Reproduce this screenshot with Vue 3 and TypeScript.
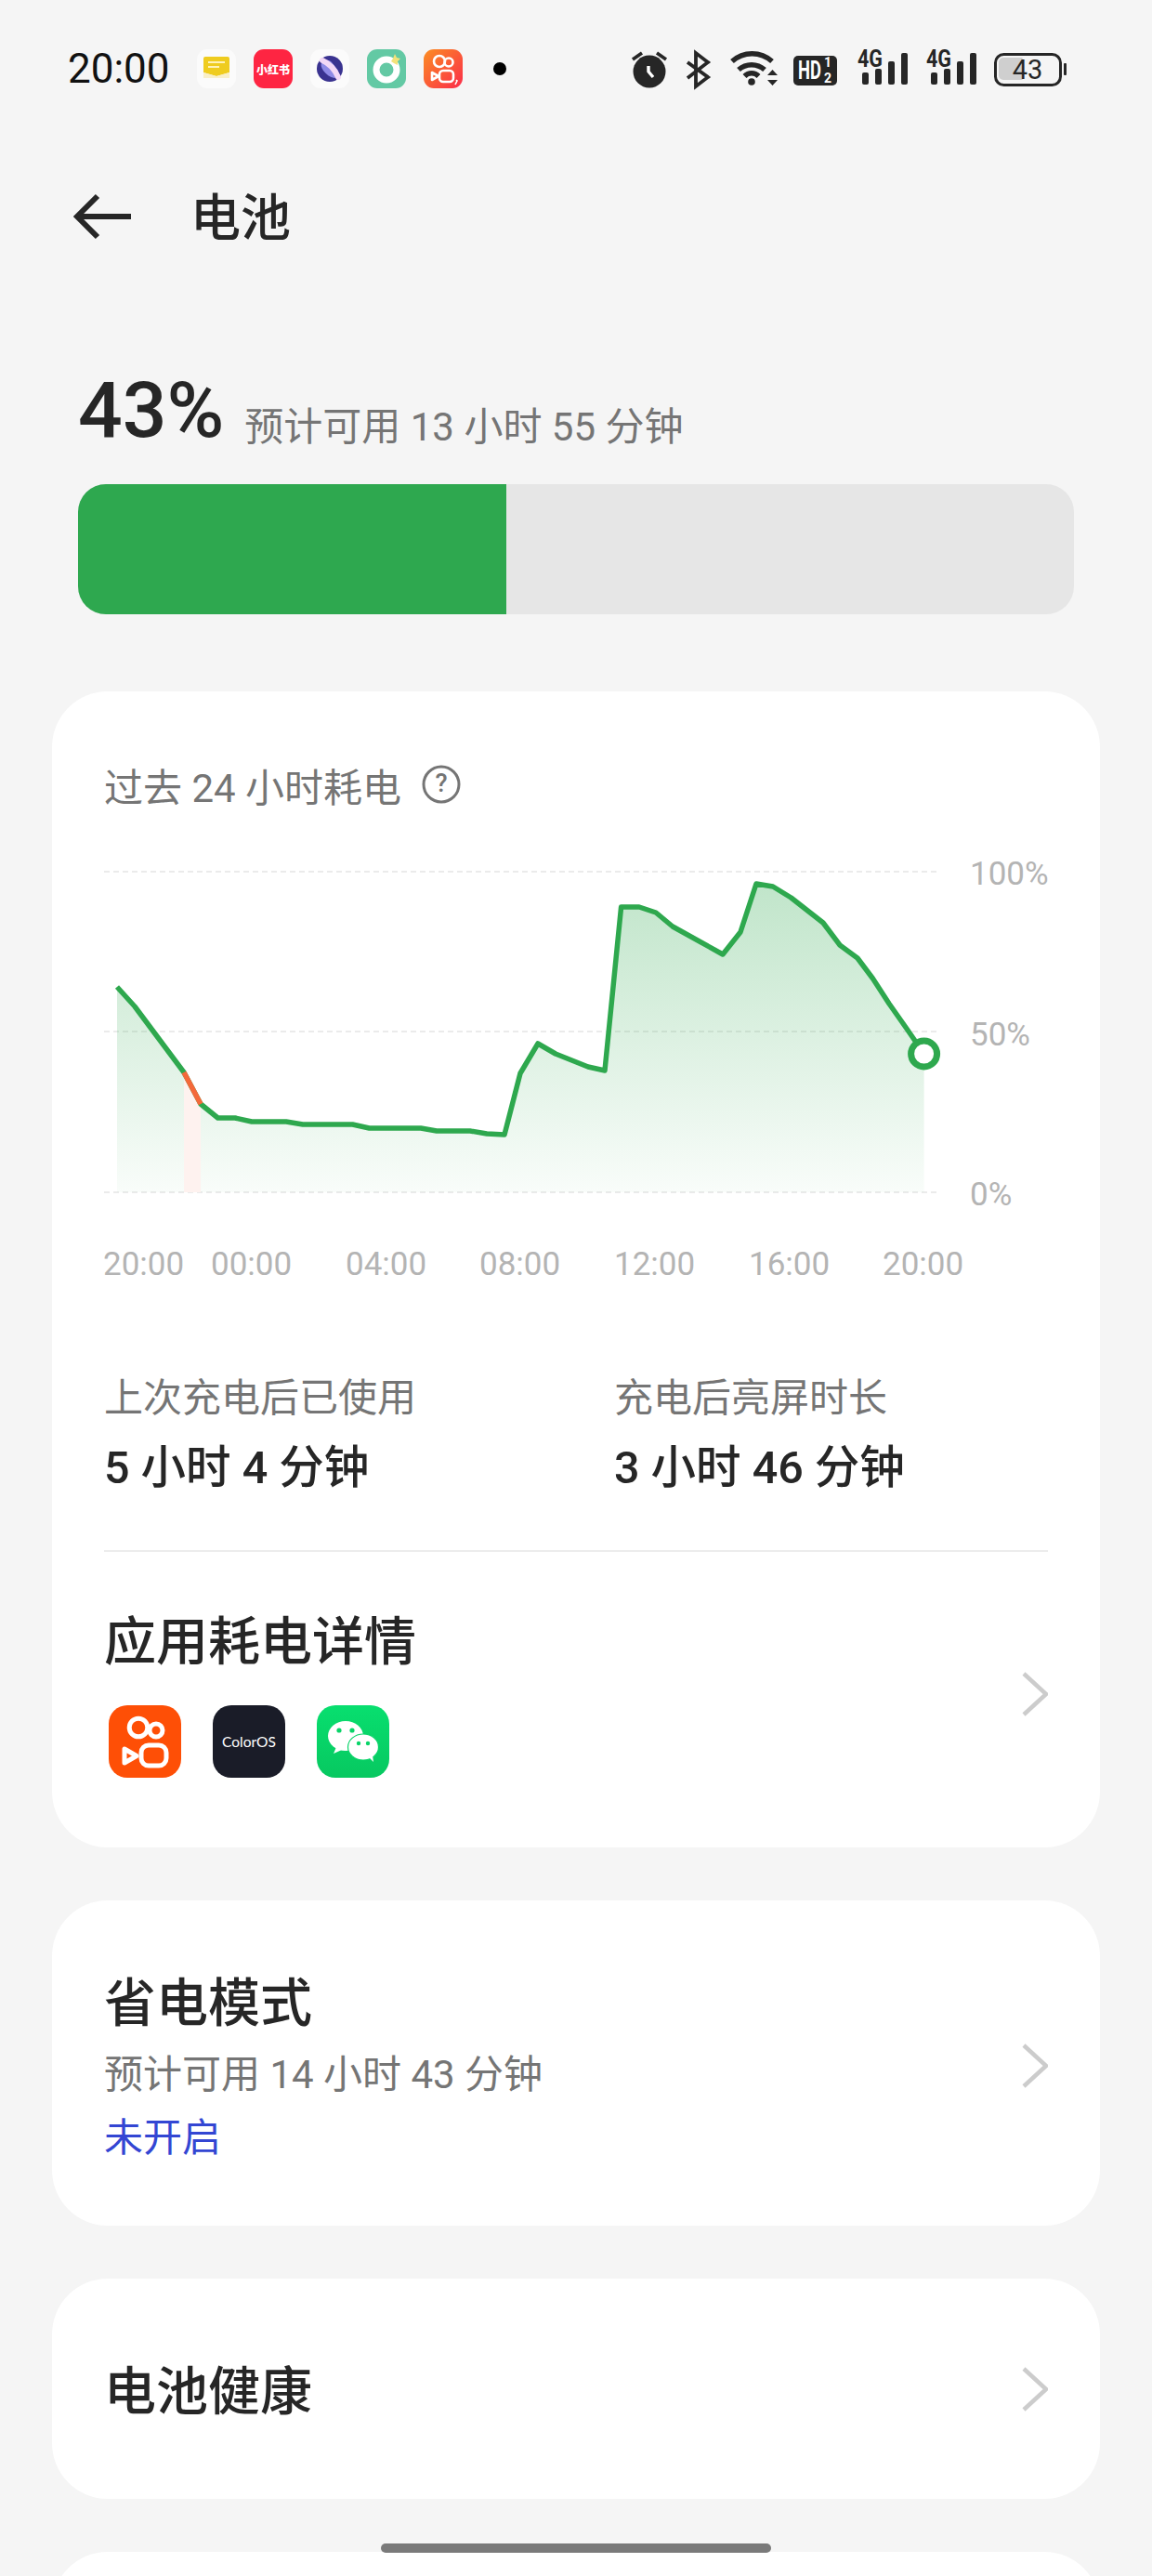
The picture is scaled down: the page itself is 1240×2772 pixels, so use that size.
<template>
  <div class="page">
    <!-- status bar -->
    <div class="status">
      <span class="time">20:00</span>
      <div class="notif">
        <svg class="tile" viewBox="0 0 42 42">
          <rect width="42" height="42" rx="11" fill="#fbfbfb" />
          <path d="M7 10a2 2 0 0 1 2-2h24a2 2 0 0 1 2 2v15l-14 4-14-4z" fill="#efcc1f" />
          <path d="M7 25l14 4 14-4v6H7z" fill="#f9efc8" />
          <path d="M12 14h18M12 19h12" stroke="#fff3b8" stroke-width="2" />
        </svg>
        <div class="tile red">小红书</div>
        <svg class="tile" viewBox="0 0 42 42">
          <rect width="42" height="42" rx="11" fill="#fbfbfb" />
          <circle cx="21" cy="21" r="14" fill="#3a3390" />
          <path d="M12 15c4-4 8-4 11-1l7 9c1 4-1 7-4 8-5-1-9-4-12-8-2-3-3-6-2-8z" fill="#8f8ae6" />
          <path d="M13 12c7 3 13 9 17 18" stroke="#f3d8f6" stroke-width="6" stroke-linecap="round" fill="none" />
        </svg>
        <svg class="tile" viewBox="0 0 42 42">
          <rect width="42" height="42" rx="11" fill="#63c9a4" />
          <circle cx="21" cy="22" r="11" fill="none" stroke="#fff" stroke-width="7" />
          <path d="M30 5l2 4 4 1-3 3 0 4-4-2-3-2 2-3z" fill="#f3e27a" />
        </svg>
        <svg class="tile" viewBox="0 0 42 42">
          <defs>
            <linearGradient id="ks" x1="0" y1="0" x2="1" y2="1">
              <stop offset="0" stop-color="#fb8e23" />
              <stop offset="1" stop-color="#fb2c4a" />
            </linearGradient>
          </defs>
          <rect width="42" height="42" rx="11" fill="url(#ks)" />
          <g fill="none" stroke="#fff" stroke-width="2.6" stroke-linejoin="round">
            <circle cx="17" cy="13" r="6" />
            <circle cx="27" cy="14" r="4.5" />
            <rect x="17" y="23" width="15" height="12" rx="4" />
            <path d="M9 25v8l7-4z" />
          </g>
          <path d="M35 33l1 1-2 4" stroke="#fff" stroke-width="1.6" fill="none" />
        </svg>
      </div>
      <span class="dot" />
      <div class="sysicons">
        <svg width="50" height="52" viewBox="678 48 50 52">
          <circle cx="699" cy="77" r="17.5" fill="#262626" />
          <path d="M681 64l10-7M707 57l10 7" stroke="#262626" stroke-width="3.6" />
          <path d="M698 71v6l5 6" stroke="#fff" stroke-width="3.4" fill="none" />
        </svg>
        <svg width="48" height="52" viewBox="728 48 48 52">
          <path d="M740 67l22 16-13 10V57l13 10-22 17" fill="none" stroke="#262626" stroke-width="3.8" />
        </svg>
        <svg width="70" height="52" viewBox="776 48 70 52">
          <g fill="none" stroke="#262626" stroke-width="5.5">
            <path d="M788 66a32 32 0 0 1 43 0" />
            <path d="M795 75a21 21 0 0 1 28 0" />
            <path d="M801.500 82a10.500 10.500 0 0 1 15 0" />
          </g>
          <circle cx="809" cy="88" r="3.800" fill="#262626" />
          <path d="M826 81l5.500-6 5.500 6zM826 86h11l-5.500 6z" fill="#262626" />
        </svg>
        <svg width="68" height="52" viewBox="846 48 68 52">
          <rect x="854" y="60" width="47" height="32" rx="5" fill="#262626" />
          <text transform="translate(859 85) scale(0.68 1)" class="hd">HD</text>
          <text x="887" y="72" class="hd-n">1</text>
          <text x="887" y="89" class="hd-n">2</text>
        </svg>
        <svg v-for="n in 2" :key="n" width="74" height="52" viewBox="914 48 74 52">
          <text x="923" y="72" class="net" textLength="27" lengthAdjust="spacingAndGlyphs">4G</text>
          <rect
            v-for="b in signalBars"
            :key="b.x"
            :x="b.x"
            :y="b.y"
            width="7"
            :height="91 - b.y"
            rx="2"
            fill="#262626"
          />
        </svg>
        <svg width="88" height="52" viewBox="1062 48 88 52">
          <rect x="1071.500" y="58.500" width="70" height="33" rx="9" fill="none" stroke="#262626" stroke-width="3" />
          <path d="M1080 62h20.500v24H1080a5 5 0 0 1-5-5V67a5 5 0 0 1 5-5z" fill="#cfcfcf" />
          <text x="1106" y="85" text-anchor="middle" class="bat">43</text>
          <rect x="1145" y="68" width="3" height="13" rx="1" fill="#262626" />
        </svg>
      </div>
    </div>

    <!-- header -->
    <div class="nav">
      <svg class="back" width="66" height="52" viewBox="0 0 66 52">
        <path d="M27 4L5 26l22 22M5 26h58" fill="none" stroke="#262626" stroke-width="6" />
      </svg>
      <span class="nav-title">电池</span>
    </div>

    <!-- level -->
    <div class="level">
      <span class="level-num">43%</span>
      <span class="level-sub">预计可用 13 小时 55 分钟</span>
    </div>
    <div class="bar"><div class="bar-fill" /></div>

    <div class="cards">
      <section class="card">
        <div class="chart-head">
          <span>过去 24 小时耗电</span>
          <svg width="42" height="42" viewBox="0 0 42 42">
            <circle cx="21" cy="21" r="19" fill="none" stroke="#757575" stroke-width="3" />
            <text x="21" y="29" text-anchor="middle" class="qmark">?</text>
          </svg>
        </div>

        <svg class="chart" width="1030" height="460" viewBox="112 920 1030 460">
          <defs>
            <linearGradient id="area" x1="0" y1="950" x2="0" y2="1283" gradientUnits="userSpaceOnUse">
              <stop offset="0" stop-color="#2ea84e" stop-opacity="0.3" />
              <stop offset="1" stop-color="#2ea84e" stop-opacity="0.03" />
            </linearGradient>
          </defs>
          <path
            v-for="y in [938, 1110, 1283]"
            :key="y"
            :d="`M112 ${y}H1010`"
            stroke="#ebebeb"
            stroke-width="2"
            stroke-dasharray="6 4"
          />
          <path :d="areaPath" fill="url(#area)" />
          <path d="M198 1154L216 1188V1283H198Z" fill="#fef2ef" />
          <path :d="linePath" fill="none" stroke="#2ea84e" stroke-width="5.500" stroke-linejoin="round" />
          <path d="M198 1154L216 1188" stroke="#f4693a" stroke-width="5.500" />
          <circle cx="994.600" cy="1134" r="14" fill="#fff" stroke="#2ea84e" stroke-width="7" />
          <text v-for="l in yLabels" :key="l.text" x="1044" :y="l.y" class="axis">{{ l.text }}</text>
          <text v-for="l in xLabels" :key="l.x" :x="l.x" y="1372" class="axis">{{ l.text }}</text>
        </svg>

        <div class="stats">
          <div>
            <div class="stat-label">上次充电后已使用</div>
            <div class="stat-value">5 小时 4 分钟</div>
          </div>
          <div>
            <div class="stat-label">充电后亮屏时长</div>
            <div class="stat-value">3 小时 46 分钟</div>
          </div>
        </div>
        <div class="divider" />

        <div class="row apps-row">
          <div>
            <div class="row-title">应用耗电详情</div>
            <div class="apps">
              <svg width="78" height="78" viewBox="0 0 78 78">
                <rect width="78" height="78" rx="20" fill="#fe4f06" />
                <g fill="none" stroke="#fff" stroke-width="5" stroke-linejoin="round">
                  <circle cx="32" cy="24" r="9.800" />
                  <circle cx="51" cy="27" r="7" />
                  <rect x="35" y="43" width="27" height="22" rx="8" />
                  <path d="M17 47v15l13-7.500z" />
                </g>
              </svg>
              <div class="app-os">ColorOS</div>
              <svg width="78" height="78" viewBox="0 0 78 78">
                <defs>
                  <linearGradient id="wx" x1="0" y1="0" x2="0" y2="1">
                    <stop offset="0" stop-color="#08df6f" />
                    <stop offset="1" stop-color="#07c860" />
                  </linearGradient>
                </defs>
                <rect width="78" height="78" rx="20" fill="url(#wx)" />
                <ellipse cx="31" cy="33" rx="19" ry="16" fill="#fff" />
                <path d="M21 45l-3 7 9-4z" fill="#fff" />
                <circle cx="24" cy="27" r="2.600" fill="#08d468" />
                <circle cx="38" cy="27" r="2.600" fill="#08d468" />
                <ellipse cx="50" cy="45" rx="16.500" ry="14" fill="#fff" stroke="#08d468" stroke-width="1.200" />
                <path d="M56 56l5 5-1-7z" fill="#fff" />
                <circle cx="45" cy="41" r="2.200" fill="#08d468" />
                <circle cx="55" cy="41" r="2.200" fill="#08d468" />
              </svg>
            </div>
          </div>
          <svg class="chev" width="28" height="48" viewBox="0 0 28 48">
            <path d="M2 2l24 22L2 46" fill="none" stroke="#cccccc" stroke-width="4.500" />
          </svg>
        </div>
      </section>

      <section class="card saver">
        <div class="row">
          <div>
            <div class="row-title">省电模式</div>
            <div class="row-sub">预计可用 14 小时 43 分钟</div>
            <div class="row-state">未开启</div>
          </div>
          <svg class="chev" width="28" height="48" viewBox="0 0 28 48">
            <path d="M2 2l24 22L2 46" fill="none" stroke="#cccccc" stroke-width="4.500" />
          </svg>
        </div>
      </section>

      <section class="card health">
        <div class="row">
          <div class="row-title">电池健康</div>
          <svg class="chev" width="28" height="48" viewBox="0 0 28 48">
            <path d="M2 2l24 22L2 46" fill="none" stroke="#cccccc" stroke-width="4.500" />
          </svg>
        </div>
      </section>

      <section class="card tail" />
    </div>

    <div class="home-bar" />
  </div>
</template>

<script setup lang="ts">
import { computed } from "vue";

// battery curve, in chart pixels
const points: [number, number][] = [
  [126, 1062], [145, 1083], [198, 1154], [216, 1188], [234.5, 1203], [253, 1203],
  [271, 1207], [308, 1207], [326, 1210], [379.5, 1210], [397.5, 1214], [453, 1214],
  [470, 1217], [506, 1217], [524, 1220], [543, 1221], [560, 1155], [579, 1123],
  [598, 1134], [633, 1148], [651, 1152], [668.6, 976], [688, 976], [706, 982],
  [724, 997], [778, 1027], [797, 1003], [814, 951], [832, 954], [851.5, 966],
  [886, 993], [904, 1017], [923, 1031], [939.5, 1053], [957, 1080], [976, 1107],
  [994.6, 1134],
];

const linePath = computed(() =>
  points.map(([x, y], i) => `${i ? "L" : "M"}${x} ${y}`).join("")
);
const areaPath = computed(() => `${linePath.value}V1283H126Z`);

const yLabels = [
  { text: "100%", y: 952 },
  { text: "50%", y: 1125 },
  { text: "0%", y: 1297 },
];
const xLabels = [
  { text: "20:00", x: 111 },
  { text: "00:00", x: 227 },
  { text: "04:00", x: 372 },
  { text: "08:00", x: 516 },
  { text: "12:00", x: 661 },
  { text: "16:00", x: 806 },
  { text: "20:00", x: 950 },
];

const signalBars = [
  { x: 928, y: 78 },
  { x: 942, y: 74 },
  { x: 956, y: 66 },
  { x: 970, y: 57 },
];
</script>

<style>
html,
body {
  margin: 0;
  background: #f5f5f5;
}
</style>

<style scoped>
.page {
  position: relative;
  width: 1240px;
  height: 2772px;
  overflow: hidden;
  background: #f5f5f5;
  color: #262626;
  font-family: Roboto, "Noto Sans CJK SC", sans-serif;
}

/* status bar */
.status {
  display: flex;
  align-items: center;
  height: 148px;
  padding-left: 73px;
  box-sizing: border-box;
}
.time {
  width: 139px;
  font-size: 44px;
  color: #111;
}
.notif {
  display: flex;
  gap: 19px;
}
.tile {
  width: 42px;
  height: 42px;
}
.red {
  display: flex;
  align-items: center;
  justify-content: center;
  border-radius: 11px;
  background: #fe2542;
  color: #fff;
  font-size: 12px;
  font-weight: 900;
  white-space: nowrap;
}
.dot {
  width: 14px;
  height: 14px;
  margin-left: 33px;
  border-radius: 50%;
  background: #000;
}
.sysicons {
  display: flex;
  margin-left: auto;
  margin-right: 90px;
}
.hd {
  font-size: 27px;
  font-weight: 700;
  fill: #fff;
}
.hd-n {
  font-size: 14px;
  font-weight: 700;
  fill: #fff;
}
.net {
  font-size: 25px;
  font-weight: 700;
  fill: #262626;
}
.bat {
  font-size: 29px;
  fill: #262626;
}

/* header */
.nav {
  display: flex;
  align-items: center;
  height: 170px;
  padding-left: 78px;
}
.back {
  margin-right: 61px;
}
.nav-title {
  margin-bottom: 5px;
  font-size: 54px;
  font-weight: 500;
}

/* level */
.level {
  display: flex;
  align-items: flex-start;
  gap: 22px;
  height: 100px;
  margin-top: 74px;
  padding-left: 84px;
}
.level-num {
  font-size: 84px;
  line-height: 100px;
  font-weight: 500;
}
.level-sub {
  margin-top: 40px;
  font-size: 42px;
  line-height: 56px;
  color: #757575;
}
.bar {
  width: 1072px;
  height: 140px;
  margin: 29px 0 83px 84px;
  overflow: hidden;
  border-radius: 30px;
  background: #e6e6e6;
}
.bar-fill {
  width: 43%;
  height: 100%;
  background: #2ea84f;
}

/* cards */
.cards {
  display: flex;
  flex-direction: column;
  gap: 57px;
  margin: 0 56px;
}
.card {
  padding: 0 56px;
  border-radius: 60px;
  background: #fff;
}
.chart-head {
  display: flex;
  align-items: center;
  gap: 22px;
  height: 56px;
  padding-top: 72px;
  font-size: 42px;
  color: #757575;
}
.chart {
  display: block;
  margin-top: 48px;
}
.qmark {
  font-size: 27px;
  font-weight: 500;
  fill: #757575;
}
.axis {
  font-size: 35px;
  fill: #b4b4b4;
}
.stats {
  display: grid;
  grid-template-columns: 549px 1fr;
  margin-top: 97px;
}
.stat-label {
  font-size: 42px;
  line-height: 56px;
  color: #757575;
}
.stat-value {
  margin-top: 17px;
  font-size: 48.500px;
  line-height: 60px;
  font-weight: 500;
}
.divider {
  height: 2px;
  margin-top: 58px;
  background: #ececec;
}
.row {
  display: flex;
  align-items: center;
  justify-content: space-between;
}
.apps-row {
  padding: 62px 0 75px;
}
.row-title {
  font-size: 56px;
  line-height: 70px;
  font-weight: 500;
}
.apps {
  display: flex;
  gap: 34px;
  margin: 33px 0 0 5px;
}
.app-os {
  display: flex;
  align-items: center;
  justify-content: center;
  width: 78px;
  height: 78px;
  border-radius: 20px;
  background: #1a1c28;
  color: #fff;
  font-family: Lato, Roboto, sans-serif;
  font-size: 15.500px;
}
.saver .row {
  padding: 76px 0 66px;
}
.saver .chev {
  margin-bottom: 5px;
}
.row-sub,
.row-state {
  font-size: 42px;
  line-height: 56px;
}
.row-sub {
  margin-top: 14px;
  color: #757575;
}
.row-state {
  margin-top: 12px;
  color: #3346d3;
}
.health .row {
  height: 237px;
}
.health .row-title {
  padding-top: 6px;
}
.chev {
  flex: none;
}
.tail {
  height: 200px;
}
.home-bar {
  position: absolute;
  left: 410px;
  top: 2737px;
  width: 420px;
  height: 10px;
  border-radius: 5px;
  background: #7a7a7a;
}
</style>
